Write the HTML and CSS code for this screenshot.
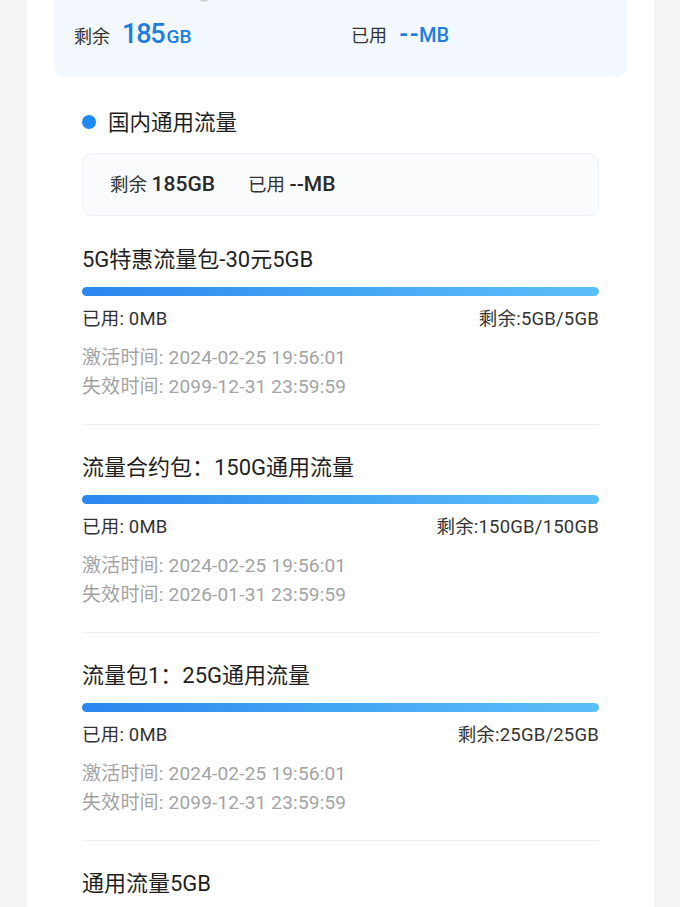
FILE: index.html
```html
<!DOCTYPE html>
<html lang="zh-CN">
<head>
<meta charset="utf-8">
<title>流量详情</title>
<link rel="stylesheet" href="styles.css">
</head>
<body>
<div class="card">
  <div class="summary">
    <div class="summary-head">
      <svg class="info" width="14" height="14" viewBox="0 0 14 14"><circle cx="7" cy="7" r="6" fill="none" stroke="#c8c8c8" stroke-width="1.4"/></svg>
    </div>
    <div class="summary-row">
      <div class="sum-item first"><span class="sum-label">剩余</span><span class="sum-num">185</span><span class="sum-unit">GB</span></div>
      <div class="sum-item"><span class="sum-label">已用</span><span class="sum-dash">--</span><span class="sum-unit">MB</span></div>
    </div>
  </div>

  <div class="domestic">
    <div class="dom-head"><span class="dot"></span><span>国内通用流量</span></div>
    <div class="dom-box">
      <span class="dom-item">剩余 <b>185GB</b></span>
      <span class="dom-item">已用 <b>--MB</b></span>
    </div>
  </div>

  <div class="pkg">
    <div class="pkg-title">5G特惠流量包-30元5GB</div>
    <div class="bar"></div>
    <div class="pkg-use"><span>已用: 0MB</span><span>剩余:5GB/5GB</span></div>
    <div class="pkg-time">激活时间: 2024-02-25 19:56:01</div>
    <div class="pkg-time">失效时间: 2099-12-31 23:59:59</div>
  </div>

  <div class="pkg">
    <div class="pkg-title">流量合约包：150G通用流量</div>
    <div class="bar"></div>
    <div class="pkg-use"><span>已用: 0MB</span><span>剩余:150GB/150GB</span></div>
    <div class="pkg-time">激活时间: 2024-02-25 19:56:01</div>
    <div class="pkg-time">失效时间: 2026-01-31 23:59:59</div>
  </div>

  <div class="pkg">
    <div class="pkg-title">流量包1：25G通用流量</div>
    <div class="bar"></div>
    <div class="pkg-use"><span>已用: 0MB</span><span>剩余:25GB/25GB</span></div>
    <div class="pkg-time">激活时间: 2024-02-25 19:56:01</div>
    <div class="pkg-time">失效时间: 2099-12-31 23:59:59</div>
  </div>

  <div class="pkg last">
    <div class="pkg-title">通用流量5GB</div>
    <div class="bar"></div>
  </div>
</div>
</body>
</html>
```
FILE: styles.css
```css
html, body {
  margin: 0;
  padding: 0;
  background: #f5f5f5;
  font-family: Roboto, "Noto Sans CJK SC", sans-serif;
  color: #333;
}

.card {
  margin: -40px 26px 0 27px;
  background: #fff;
  padding: 0 27px 40px;
}

.summary {
  background: #f3f8fe;
  border-radius: 0 0 12px 12px;
  padding: 0 20px 28px;
}

.summary-head {
  height: 59px;
  position: relative;
}

.info {
  position: absolute;
  left: 123px;
  bottom: 17px;
}

.summary-row {
  display: flex;
  height: 30px;
  align-items: center;
}

.sum-item {
  display: flex;
  align-items: baseline;
  flex: 0 0 auto;
}

.sum-item.first {
  width: 277px;
}

.sum-label {
  font-size: 18px;
  color: #333;
  margin-right: 12px;
}

.sum-num {
  font-size: 27px;
  font-weight: 500;
  color: #1c7fe0;
  letter-spacing: -1.2px;
}

.sum-unit {
  font-size: 19px;
  font-weight: 500;
  color: #1c7fe0;
  margin-left: 2px;
}

.sum-dash {
  font-size: 24px;
  font-weight: 700;
  color: #1c7fe0;
  letter-spacing: 1px;
  margin-right: -1px;
}

.sum-dash + .sum-unit {
  margin-left: 0;
  font-size: 20px;
}

.domestic {
  padding: 28px 28px 1px;
}

.dom-head {
  display: flex;
  align-items: center;
  height: 30px;
  font-size: 21.5px;
  color: #1f1f1f;
}

.dot {
  width: 14px;
  height: 14px;
  border-radius: 50%;
  background: #1e88f5;
  margin-right: 12px;
  margin-top: 3px;
}

.dom-box {
  margin-top: 18px;
  height: 61px;
  box-sizing: content-box;
  border: 1px solid #eef1f5;
  background: #f9fbfd;
  border-radius: 10px;
  display: flex;
  align-items: center;
  padding: 0 27px;
  gap: 33px;
  font-size: 18.5px;
  color: #333;
}

.dom-item {
  margin-top: -3px;
}

.dom-item b {
  font-weight: 500;
  font-size: 21px;
  color: #2a2a2a;
}

.pkg {
  margin: 0 28px;
  padding: 28px 0 23px;
  border-bottom: 1px solid #eeeeee;
}

.pkg.last {
  border-bottom: none;
}

.pkg-title {
  height: 30px;
  line-height: 30px;
  font-size: 22px;
  color: #1f1f1f;
}

.bar {
  margin-top: 12px;
  height: 9px;
  border-radius: 5px;
  background: linear-gradient(90deg, #2a86ee 0%, #43a6f4 50%, #5dbff9 100%);
}

.pkg-use {
  margin-top: 10px;
  height: 27px;
  line-height: 27px;
  display: flex;
  justify-content: space-between;
  font-size: 18.5px;
  letter-spacing: 0.2px;
  color: #333;
}

.pkg-use + .pkg-time {
  margin-top: 10px;
}

.pkg-time {
  height: 29px;
  line-height: 29px;
  font-size: 19px;
  letter-spacing: 0.2px;
  color: #a3a3a3;
}
```
